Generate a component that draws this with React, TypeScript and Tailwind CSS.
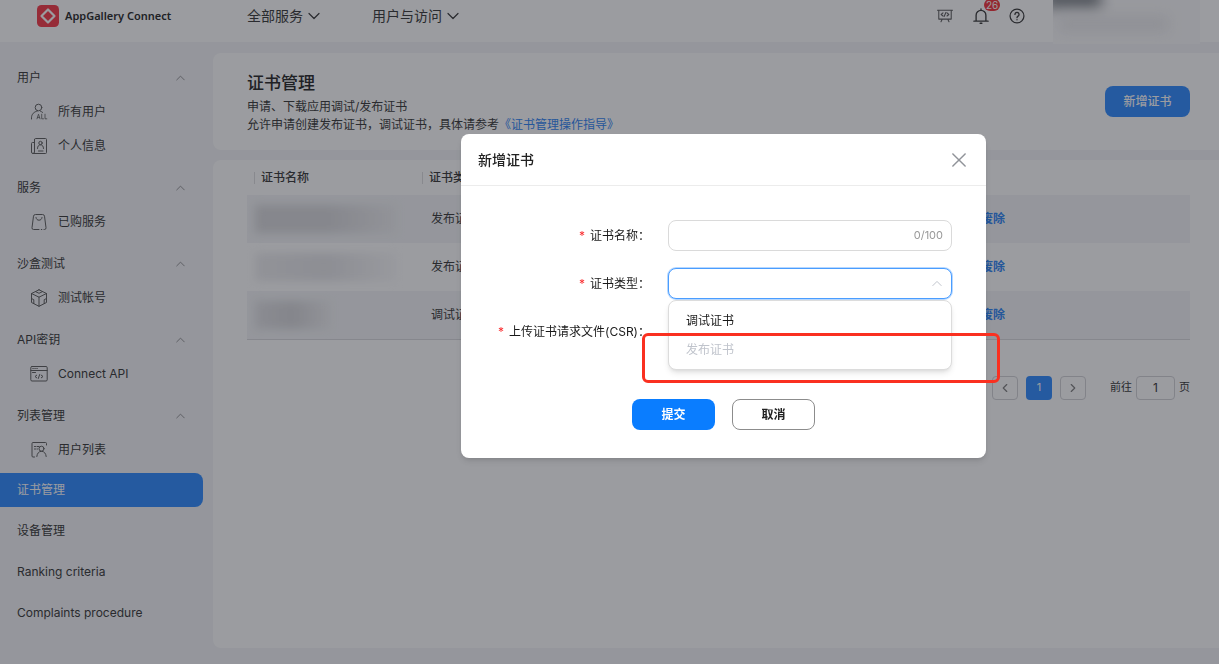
import { useState, type ReactNode } from "react";
import { ChevronLeft, ChevronRight } from "lucide-react";

interface MenuGroup {
  title: string;
  items: { label: string; icon: ReactNode }[];
}

function LineIcon({ children, className = "w-[18px] h-[18px]" }: { children: ReactNode; className?: string }) {
  return (
    <svg
      viewBox="0 0 18 18"
      fill="none"
      stroke="currentColor"
      strokeWidth="1"
      strokeLinecap="round"
      strokeLinejoin="round"
      className={className}
      aria-hidden="true"
    >
      {children}
    </svg>
  );
}

function Caret({ up = false, className }: { up?: boolean; className: string }) {
  return (
    <svg
      viewBox="0 0 12 8"
      fill="none"
      stroke="currentColor"
      strokeWidth="1.200"
      strokeLinecap="round"
      strokeLinejoin="round"
      className={className}
      aria-hidden="true"
    >
      <path d={up ? "M1 6.500l5-5 5 5" : "M1 1.500l5 5 5-5"} />
    </svg>
  );
}

const allUsersIcon = (
  <LineIcon>
    <circle cx="8.500" cy="4.500" r="3.300" />
    <path d="M1.500 16v-1.200c0-3.600 2.600-6.200 5.800-6.700M10.500 8.200c.8.300 1.500.7 2.100 1.200" />
    <path d="M7 15.800l1.500-4.600 1.500 4.600M7.500 14.400h2M11.700 11.200v4.600h1.800M15 11.200v4.600h1.800" strokeWidth="0.8" />
  </LineIcon>
);

const profileIcon = (
  <LineIcon>
    <path d="M4.500 2.500a1 1 0 0 1 1-1h10a1 1 0 0 1 1 1v13a1 1 0 0 1-1 1H3a1.500 1.500 0 0 1-1.500-1.500V6.500a1 1 0 0 1 1-1h2" />
    <path d="M4.500 2.500V15a1.500 1.500 0 0 1-1.500 1.500M8.500 14h4.500" />
    <circle cx="10.500" cy="6" r="1.700" />
    <path d="M7.500 11.500c0-2.300 1.200-3.700 3-3.700s3 1.400 3 3.700" />
  </LineIcon>
);

const bagIcon = (
  <LineIcon>
    <path d="M9 16.500H3.600A1.600 1.600 0 0 1 2 14.700L3.500 3.200a2 2 0 0 1 2-1.700h7a2 2 0 0 1 2 1.700L16 14.700a1.600 1.600 0 0 1-1.600 1.800H14M11.300 16.500h.5" />
    <path d="M6 4.500c.3 1.800 1.400 2.700 3 2.700s2.700-.9 3-2.700" />
  </LineIcon>
);

const cubeIcon = (
  <LineIcon>
    <path d="M9 .8l7.500 3.700v9L9 17.300 1.500 13.500v-9L9 .8z" />
    <path d="M1.500 4.500L9 8.200l7.500-3.700M9 8.200v9.100M5.500 2.600L9 4.300l3.500-1.700M1.500 9.500l2.300 1.200v3.900M16.500 9.500l-2.300 1.200v3.900" />
  </LineIcon>
);

const apiIcon = (
  <LineIcon>
    <rect x=".8" y="1.500" width="16.400" height="14.500" rx="1.200" />
    <path d="M.8 5.500h16.400M2.800 3.500h.5M4.800 3.500h.5M6.800 3.500h.5M2.500 7.500h3M6.700 10.200l-1.700 1.300 1.700 1.300M9.700 9.500l-1.400 4M11.300 10.200l1.700 1.300-1.700 1.300" />
  </LineIcon>
);

const userListIcon = (
  <LineIcon>
    <path d="M4.500 16H3a1 1 0 0 1-1-1V2.500a1 1 0 0 1 1-1h12.500a1 1 0 0 1 1 1v1.500M4.500 5.500h1M7 5.500h2M4.500 8h1M7 8h.5" />
    <circle cx="11.500" cy="7.700" r="2.500" />
    <path d="M6.800 15.500c.3-3 2-5.200 4.700-5.200s4.400 2.200 4.700 5.200" />
  </LineIcon>
);

const menuGroups: MenuGroup[] = [
  {
    title: "用户",
    items: [
      { label: "所有用户", icon: allUsersIcon },
      { label: "个人信息", icon: profileIcon },
    ],
  },
  { title: "服务", items: [{ label: "已购服务", icon: bagIcon }] },
  { title: "沙盒测试", items: [{ label: "测试帐号", icon: cubeIcon }] },
  { title: "API密钥", items: [{ label: "Connect API", icon: apiIcon }] },
  { title: "列表管理", items: [{ label: "用户列表", icon: userListIcon }] },
];

const pages = ["证书管理", "设备管理", "Ranking criteria", "Complaints procedure"];

const certificates = [
  { id: 1, type: "发布证书", mask: "w-[142px] from-[#dcdcdf] via-[#dcdcdf] to-[#f1f1f3]" },
  { id: 2, type: "发布证书", mask: "w-[142px] from-[#f0f0f2] via-[#e8e8eb] to-[#fbfbfc]" },
  { id: 3, type: "调试证书", mask: "w-[76px] from-[#e4e4e7] via-[#dadadd] to-[#f1f1f3]" },
];

function Header() {
  return (
    <header className="flex h-[42px] items-start bg-white pl-[37px] text-[#444]">
      <div className="flex h-8 w-[210px] items-center gap-[6px]">
        <svg viewBox="0 0 22 22" className="h-[22px] w-[22px]" aria-hidden="true">
          <rect width="22" height="22" rx="4.500" fill="#f74553" />
          <path d="M11 4.500L17.500 11 11 17.500 4.500 11z" fill="none" stroke="#fff" strokeWidth="2.200" strokeLinejoin="round" />
        </svg>
        <span className="font-['Noto_Sans',sans-serif] text-[11px] font-semibold text-[#333]">AppGallery Connect</span>
      </div>
      <nav className="flex h-8 flex-1 items-center gap-[52px] text-sm">
        {["全部服务", "用户与访问"].map((label) => (
          <button key={label} className="flex items-center gap-[5px]">
            {label}
            <Caret className="h-2 w-3" />
          </button>
        ))}
      </nav>
      <div className="flex h-8 items-center gap-5 pr-7">
        <button aria-label="开发工具" className="text-[#666]">
          <LineIcon className="h-4 w-4">
            <path d="M.5 2.500h17M2 2.500V12.500h14V2.500M6 12.500L4.500 15.500M12 12.500l1.500 3M6.700 5.500L4.700 7.300l2 1.700M11.300 5.500l2 1.800-2 1.700M10 5L8 9.600" strokeWidth="1.200" />
          </LineIcon>
        </button>
        <button aria-label="消息" className="relative">
          <LineIcon className="h-4 w-4">
            <path d="M3.500 14.500V8.200a5.500 5.500 0 0 1 11 0v6.300M1 14.800h16M9 1v1.500M8 17.200h2" strokeWidth="1.500" />
          </LineIcon>
          <span className="absolute -top-[9px] left-[11px] rounded-full bg-[#f43f46] px-[2px] font-['Inter',sans-serif] text-[10px] leading-3 text-white">
            26
          </span>
        </button>
        <button aria-label="帮助">
          <LineIcon className="h-4 w-4">
            <circle cx="9" cy="9" r="7.800" strokeWidth="1.400" />
            <path d="M6.700 7.200a2.300 2.300 0 1 1 3.500 2c-.8.500-1.200.9-1.200 1.700M9 13v.2" strokeWidth="1.500" />
          </LineIcon>
        </button>
      </div>
      {/* account area, masked */}
      <div className="relative mr-[19px] h-11 w-[147px] overflow-hidden bg-[#fbfbfc]">
        <div className="absolute -top-3 -left-2 h-5 w-14 bg-[#868b90] blur-[7px]" />
        <div className="absolute top-4 left-1 h-4 w-28 bg-[#ececee] blur-[7px]" />
      </div>
    </header>
  );
}

function Sidebar() {
  return (
    <aside className="w-[213px] shrink-0 pt-[19px] text-[#444]">
      <nav>
        <div className="flex flex-col gap-2">
          {menuGroups.map((group) => (
            <div key={group.title}>
              <button className="flex h-[34px] w-full items-center justify-between pr-7 pl-[17px]">
                {group.title}
                <Caret up className="h-[6px] w-[9px] text-[#8f8f93]" />
              </button>
              {group.items.map((item) => (
                <a key={item.label} href="#" className="flex h-[34px] items-center gap-[10px] pl-[30px]">
                  <span className="text-[#666]">{item.icon}</span>
                  {item.label}
                </a>
              ))}
            </div>
          ))}
        </div>
        <div className="mt-[6px] flex flex-col gap-[7px] pr-[10px]">
          {pages.map((page) => (
            <a
              key={page}
              href="#"
              className={`flex h-[34px] items-center rounded-r-lg pl-[17px] ${
                page === "证书管理" ? "bg-[#3b92ff] text-white" : ""
              }`}
            >
              {page}
            </a>
          ))}
        </div>
      </nav>
    </aside>
  );
}

function CertificateTable() {
  return (
    <table className="w-full table-fixed border-b border-[#dcdce0] text-left">
      <thead>
        <tr className="h-[35px]">
          {["证书名称", "证书类型", "操作"].map((name, i) => (
            <th key={name} className={`pl-[7px] font-medium ${i === 0 ? "w-[168px]" : i === 2 ? "w-[265px]" : ""}`}>
              <span className="block border-l border-[#dfdfe2] pl-[6px] leading-3">{name}</span>
            </th>
          ))}
        </tr>
      </thead>
      <tbody>
        {certificates.map((cert) => (
          <tr key={cert.id} className="h-12 odd:bg-[#f5f6f8]">
            <td className="pl-2">
              <div className={`h-7 bg-linear-to-r blur-[4px] ${cert.mask}`} />
            </td>
            <td className="pl-4">{cert.type}</td>
            <td className="pl-2 font-bold text-[#3b8cf5]">
              <div className="flex gap-6">
                <a href="#">下载</a>
                <a href="#">废除</a>
              </div>
            </td>
          </tr>
        ))}
      </tbody>
    </table>
  );
}

function Pagination() {
  return (
    <div className="mt-9 flex items-center justify-end gap-1 text-[11px]">
      <div className="mr-5 flex gap-2">
        <button aria-label="上一页" className="flex h-6 w-[26px] items-center justify-center rounded border border-[#d5d5d9] text-[#888]">
          <ChevronLeft className="h-[14px] w-[14px]" />
        </button>
        <button className="h-6 w-[26px] rounded bg-[#3b92ff] text-white">1</button>
        <button aria-label="下一页" className="flex h-6 w-[26px] items-center justify-center rounded border border-[#d5d5d9] text-[#888]">
          <ChevronRight className="h-[14px] w-[14px]" />
        </button>
      </div>
      <label htmlFor="page">前往</label>
      <input id="page" defaultValue="1" className="h-6 w-[39px] rounded border border-[#d5d5d9] text-center text-xs" />
      <span>页</span>
    </div>
  );
}

function FieldLabel({ htmlFor, children }: { htmlFor: string; children: ReactNode }) {
  return (
    <label htmlFor={htmlFor} className="w-[189px] shrink-0 text-right whitespace-nowrap text-[#191919]">
      <span className="mr-[5px] text-[#fa2a2d]">*</span>
      {children}
    </label>
  );
}

function CreateDialog() {
  const [name, setName] = useState("");
  const [type, setType] = useState("");

  return (
    <div className="fixed inset-0 flex items-start justify-center bg-[#060812]/40 pt-[134px] pl-[228px]">
      <div role="dialog" aria-label="新增证书" className="relative w-[525px] rounded-lg bg-white shadow-md">
        <div className="flex h-[52px] items-center justify-between border-b border-[#ececec] pr-[17px] pl-[17px]">
          <h2 className="text-sm font-medium text-[#222]">新增证书</h2>
          <button aria-label="关闭">
            <LineIcon className="h-5 w-5 text-[#909399]">
              <path d="M3.500 3.500l11 11M14.500 3.500l-11 11" strokeWidth="1.300" />
            </LineIcon>
          </button>
        </div>

        <form className="flex flex-col gap-[17px] pt-[34px] pr-[34px] pb-7" onSubmit={(e) => e.preventDefault()}>
          <div className="flex items-center gap-[18px]">
            <FieldLabel htmlFor="cert-name">证书名称：</FieldLabel>
            <div className="flex h-[31px] flex-1 items-center rounded-lg border border-[#dadada] px-2">
              <input
                id="cert-name"
                maxLength={100}
                value={name}
                onChange={(e) => setName(e.target.value)}
                className="min-w-0 flex-1 outline-none"
              />
              <span className="text-[11px] text-[#999]">{name.length}/100</span>
            </div>
          </div>

          <div className="flex items-center gap-[18px]">
            <FieldLabel htmlFor="cert-type">证书类型：</FieldLabel>
            <div className="relative flex-1">
              <select
                id="cert-type"
                value={type}
                onChange={(e) => setType(e.target.value)}
                className="block h-[31px] w-full appearance-none rounded-lg border border-[#4a9dff] bg-white px-4 ring-1 ring-[#4a9dff]/40 outline-none"
              >
                <option value=""></option>
                <option value="debug">调试证书</option>
                <option value="release" disabled>
                  发布证书
                </option>
              </select>
              <Caret up className="pointer-events-none absolute top-3 right-[10px] h-[7px] w-[10px] text-[#c0c4cc]" />
              <ul className="absolute top-8 right-0 left-0 z-10 rounded-lg border border-[#dcdcdc] bg-white py-[5px] shadow-md">
                <li className="px-[17px] leading-[29px] text-[#191919]" onClick={() => setType("debug")}>
                  调试证书
                </li>
                <li className="px-[17px] leading-[29px] text-[#c0c4cc]">发布证书</li>
              </ul>
            </div>
          </div>

          <div className="flex h-[31px] items-center">
            <FieldLabel htmlFor="cert-csr">上传证书请求文件(CSR)：</FieldLabel>
            <input id="cert-csr" type="file" accept=".csr" className="sr-only" />
          </div>

          <div className="mt-[35px] flex justify-center gap-[17px] pl-[34px]">
            <button type="submit" className="h-[31px] w-[83px] rounded-lg bg-[#0a7dff] font-bold text-white">
              提交
            </button>
            <button type="button" className="h-[31px] w-[83px] rounded-lg border border-[#8c8c8c] font-bold text-[#222]">
              取消
            </button>
          </div>
        </form>

        {/* highlight around the disabled option */}
        <div className="pointer-events-none absolute top-[199px] left-[181px] z-20 h-[50px] w-[358px] rounded-md border-3 border-[#fa3020]" />
      </div>
    </div>
  );
}

export default function App() {
  return (
    <div className="flex min-h-screen flex-col bg-[#f5f6f8] font-['Inter','Noto_Sans_CJK_SC',sans-serif] text-xs text-[#444]">
      <Header />
      <div className="flex flex-1">
        <Sidebar />
        <main className="flex min-w-0 flex-1 flex-col gap-[10px] pt-[11px] pb-4">
          <section className="flex items-center justify-between rounded-l-lg bg-white py-4 pr-[29px] pl-[34px]">
            <div className="leading-[18px]">
              <h1 className="text-[17px] leading-[29px] font-medium text-[#333]">证书管理</h1>
              <p>申请、下载应用调试/发布证书</p>
              <p>
                允许申请创建发布证书，调试证书，具体请参考
                <a href="#" className="text-[#3b8cf5]">
                  《证书管理操作指导》
                </a>
              </p>
            </div>
            <button className="h-[31px] w-[85px] rounded-lg bg-[#3b92ff] font-medium text-white">新增证书</button>
          </section>

          <section className="flex-1 rounded-l-lg bg-white pr-[29px] pl-[34px]">
            <CertificateTable />
            <Pagination />
          </section>
        </main>
      </div>
      <CreateDialog />
    </div>
  );
}
